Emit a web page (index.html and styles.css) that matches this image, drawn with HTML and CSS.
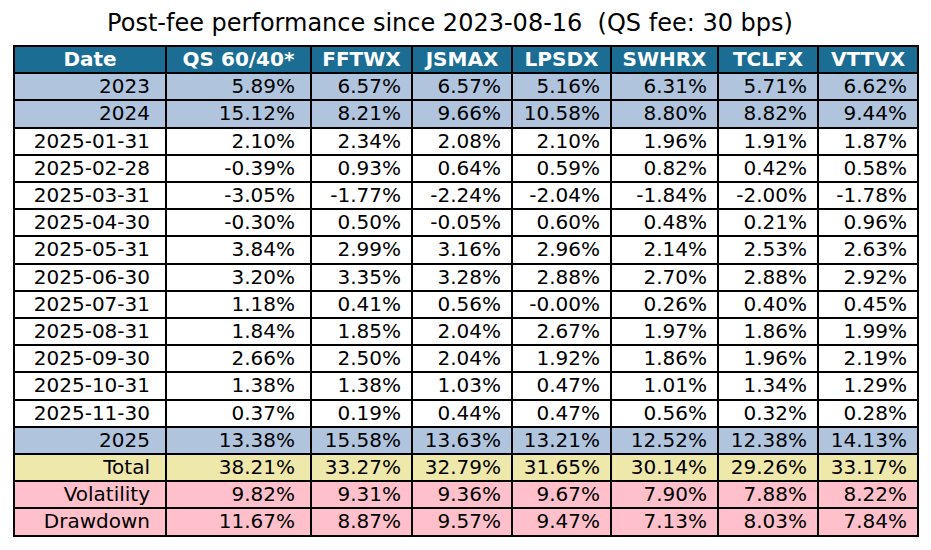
FILE: index.html
```html
<!DOCTYPE html>
<html>
<head>
<meta charset="utf-8">
<link rel="stylesheet" href="styles.css">
</head>
<body>
<div class="page">
  <h1 class="title">Post-fee performance since 2023-08-16&nbsp; (QS fee: 30 bps)</h1>
  <table class="perf">
    <colgroup>
      <col class="c1"><col class="c2"><col class="c3"><col class="c4"><col class="c5"><col class="c6"><col class="c7"><col class="c8">
    </colgroup>
    <thead>
      <tr><th>Date</th><th>QS 60/40*</th><th>FFTWX</th><th>JSMAX</th><th>LPSDX</th><th>SWHRX</th><th>TCLFX</th><th>VTTVX</th></tr>
    </thead>
    <tbody>
      <tr class="year"><td>2023</td><td>5.89%</td><td>6.57%</td><td>6.57%</td><td>5.16%</td><td>6.31%</td><td>5.71%</td><td>6.62%</td></tr>
      <tr class="year"><td>2024</td><td>15.12%</td><td>8.21%</td><td>9.66%</td><td>10.58%</td><td>8.80%</td><td>8.82%</td><td>9.44%</td></tr>
      <tr><td>2025-01-31</td><td>2.10%</td><td>2.34%</td><td>2.08%</td><td>2.10%</td><td>1.96%</td><td>1.91%</td><td>1.87%</td></tr>
      <tr><td>2025-02-28</td><td>-0.39%</td><td>0.93%</td><td>0.64%</td><td>0.59%</td><td>0.82%</td><td>0.42%</td><td>0.58%</td></tr>
      <tr><td>2025-03-31</td><td>-3.05%</td><td>-1.77%</td><td>-2.24%</td><td>-2.04%</td><td>-1.84%</td><td>-2.00%</td><td>-1.78%</td></tr>
      <tr><td>2025-04-30</td><td>-0.30%</td><td>0.50%</td><td>-0.05%</td><td>0.60%</td><td>0.48%</td><td>0.21%</td><td>0.96%</td></tr>
      <tr><td>2025-05-31</td><td>3.84%</td><td>2.99%</td><td>3.16%</td><td>2.96%</td><td>2.14%</td><td>2.53%</td><td>2.63%</td></tr>
      <tr><td>2025-06-30</td><td>3.20%</td><td>3.35%</td><td>3.28%</td><td>2.88%</td><td>2.70%</td><td>2.88%</td><td>2.92%</td></tr>
      <tr><td>2025-07-31</td><td>1.18%</td><td>0.41%</td><td>0.56%</td><td>-0.00%</td><td>0.26%</td><td>0.40%</td><td>0.45%</td></tr>
      <tr><td>2025-08-31</td><td>1.84%</td><td>1.85%</td><td>2.04%</td><td>2.67%</td><td>1.97%</td><td>1.86%</td><td>1.99%</td></tr>
      <tr><td>2025-09-30</td><td>2.66%</td><td>2.50%</td><td>2.04%</td><td>1.92%</td><td>1.86%</td><td>1.96%</td><td>2.19%</td></tr>
      <tr><td>2025-10-31</td><td>1.38%</td><td>1.38%</td><td>1.03%</td><td>0.47%</td><td>1.01%</td><td>1.34%</td><td>1.29%</td></tr>
      <tr><td>2025-11-30</td><td>0.37%</td><td>0.19%</td><td>0.44%</td><td>0.47%</td><td>0.56%</td><td>0.32%</td><td>0.28%</td></tr>
      <tr class="year"><td>2025</td><td>13.38%</td><td>15.58%</td><td>13.63%</td><td>13.21%</td><td>12.52%</td><td>12.38%</td><td>14.13%</td></tr>
      <tr class="total"><td>Total</td><td>38.21%</td><td>33.27%</td><td>32.79%</td><td>31.65%</td><td>30.14%</td><td>29.26%</td><td>33.17%</td></tr>
      <tr class="risk"><td>Volatility</td><td>9.82%</td><td>9.31%</td><td>9.36%</td><td>9.67%</td><td>7.90%</td><td>7.88%</td><td>8.22%</td></tr>
      <tr class="risk"><td>Drawdown</td><td>11.67%</td><td>8.87%</td><td>9.57%</td><td>9.47%</td><td>7.13%</td><td>8.03%</td><td>7.84%</td></tr>
    </tbody>
  </table>
</div>
</body>
</html>
```

FILE: styles.css
```css
html, body {
  margin: 0;
  padding: 0;
  background: #ffffff;
}

.page {
  width: 931px;
  height: 550px;
  padding: 7px 0 0 13px;
  box-sizing: border-box;
  font-family: "DejaVu Sans", sans-serif;
  color: #000;
}

.title {
  margin: 0 0 5px 0;
  width: 874px;
  text-align: center;
  font-weight: normal;
  font-size: 24px;
  line-height: 33px;
  white-space: pre;
}

.perf {
  border-collapse: collapse;
  table-layout: fixed;
  width: 904px;
  font-size: 20px;
}

.c1 { width: 152px; }
.c2 { width: 145px; }
.c3 { width: 101px; }
.c4 { width: 100px; }
.c5 { width: 99px; }
.c6 { width: 107px; }
.c7 { width: 100px; }
.c8 { width: 100px; }

.perf th,
.perf td {
  border: 2px solid #000;
  height: 25.2px;
  padding: 0 10px 0 0;
  line-height: 25.2px;
  text-align: right;
  white-space: nowrap;
  box-sizing: border-box;
}

.perf td:first-child,
.perf td:nth-child(2) {
  padding-right: 15px;
}

.perf th {
  background: #1b6d94;
  color: #fff;
  font-weight: bold;
  text-align: center;
  padding: 0;
}

.perf tbody td { background: #fff; }
.perf tr.year td { background: #b0c4de; }
.perf tr.total td { background: #eee8aa; }
.perf tr.risk td { background: #ffc0cb; }
```
